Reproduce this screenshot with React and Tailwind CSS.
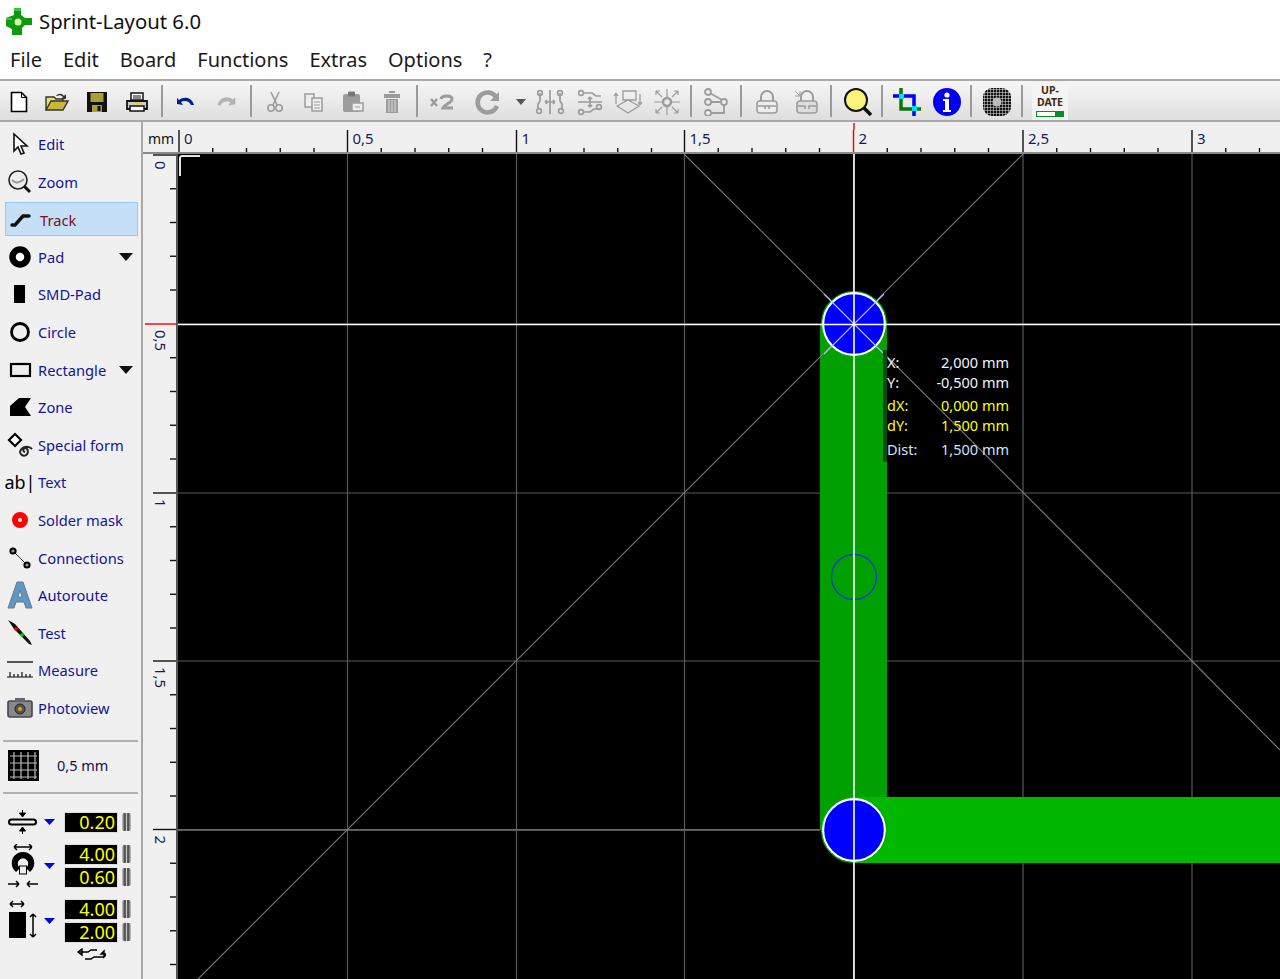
import React from 'react';

const menus = ['File', 'Edit', 'Board', 'Functions', 'Extras', 'Options', '?'];
const GRAY = '#9c9c9c';

// toolbar icons, 24x24 box
const Tb = ({ children }) => <svg width="24" height="24" viewBox="0 0 24 24">{children}</svg>;

const toolIcons = {
  new: <Tb><path d="M4.500 2.500h10l5 5v14h-15z" fill="#fff" stroke="#000" strokeWidth="1.600" /><path d="M14.500 2.500v5h5" fill="none" stroke="#000" /></Tb>,
  open: <Tb><path d="M1 20V7h8l2 2h7v3" fill="#e8e070" stroke="#333" strokeWidth="1.400" /><path d="M1 20l5-9h17l-5 9z" fill="#c8b838" stroke="#333" strokeWidth="1.400" /><path d="M11 6c2-3 6-3 8 0l2-2v5h-5l2-2c-2-2-4-2-6-1z" fill="#333" /></Tb>,
  save: <Tb><rect x="2" y="2" width="20" height="20" fill="#111" /><rect x="5.500" y="3" width="13" height="9" fill="#a8a030" /><rect x="7" y="15" width="10" height="7" fill="#a8a030" /><rect x="12.500" y="16" width="3" height="5" fill="#111" /></Tb>,
  print: <Tb><path d="M6 3h12v7H6z" fill="#fff" stroke="#111" strokeWidth="1.500" /><path d="M2 11h20v8H2z" fill="#ccc" stroke="#111" strokeWidth="1.800" /><path d="M5 16h14v5H5z" fill="#fff" stroke="#111" strokeWidth="1.500" /><path d="M8 6h8M8 8h8" stroke="#111" /><path d="M10 13h6" stroke="#e8d800" strokeWidth="2" /></Tb>,
  undo: <Tb><path d="M9 15l-6-1 0-6 2 2c5-4 13-3 15 5h-3c-2-4-6-5-10-3z" fill="#00208c" /></Tb>,
  redo: <Tb><path d="M15 15l6-1 0-6-2 2c-5-4-13-3-15 5h2c3-4 7-5 11-3z" fill="#b4b4b4" stroke="#9c9c9c" strokeWidth=".5" /></Tb>,
  cut: <Tb><path d="M8 2l6 13M16 2l-6 13" stroke={GRAY} strokeWidth="1.600" fill="none" /><circle cx="8" cy="18" r="3.200" fill="none" stroke={GRAY} strokeWidth="1.600" /><circle cx="16" cy="18" r="3.200" fill="none" stroke={GRAY} strokeWidth="1.600" /></Tb>,
  copy: <Tb><path d="M3 4h9v13H3z" fill="#eee" stroke={GRAY} strokeWidth="1.500" /><path d="M10 8h10v13H10z" fill="#eee" stroke={GRAY} strokeWidth="1.500" /><path d="M12 12h6M12 15h6M12 18h6" stroke={GRAY} /></Tb>,
  paste: <Tb><rect x="2" y="4" width="17" height="18" rx="2" fill={GRAY} /><rect x="7" y="1.500" width="7" height="5" rx="1" fill="#777" /><path d="M11 13h11v8H11z" fill="#eee" stroke={GRAY} strokeWidth="1.500" /><path d="M14 17h5" stroke={GRAY} /></Tb>,
  trash: <Tb><path d="M9 1h6v2H9zM4 4h16v4H4z" fill={GRAY} /><path d="M6 9h12v14H6z" fill={GRAY} /><path d="M9 10v12M12 10v12M15 10v12" stroke="#ddd" /></Tb>,
  x2: <svg width="30" height="24" viewBox="0 0 30 24"><path d="M3 9l6 7M9 9l-6 7" stroke={GRAY} strokeWidth="2.400" /><path d="M13 9c1-4 11-4 11 0 0 4-7 5-9 9h10" fill="none" stroke={GRAY} strokeWidth="3" /></svg>,
  rotate: <svg width="26" height="26" viewBox="0 0 26 26"><path d="M21 8A10 10 0 1 0 22 17" fill="none" stroke={GRAY} strokeWidth="4.500" /><path d="M24 3v9h-9z" fill={GRAY} /></svg>,
  drop: <svg width="10" height="6" viewBox="0 0 10 6"><path d="M0 0h10L5 6z" fill="#555" /></svg>,
  flipH: <svg width="28" height="28" viewBox="0 0 28 28"><path d="M4 5v8l-2 3v6M24 5v8l2 3v6M9 14h10M9 14l2-2M9 14l2 2M19 14l-2-2M19 14l-2 2M14 2v24" stroke={GRAY} strokeWidth="1.700" fill="none" /><circle cx="4" cy="5" r="2.400" fill="none" stroke={GRAY} strokeWidth="1.600" /><circle cx="24" cy="5" r="2.400" fill="none" stroke={GRAY} strokeWidth="1.600" /><circle cx="3" cy="23" r="2.400" fill="none" stroke={GRAY} strokeWidth="1.600" /><circle cx="25" cy="23" r="2.400" fill="none" stroke={GRAY} strokeWidth="1.600" /></svg>,
  flipV: <svg width="28" height="28" viewBox="0 0 28 28"><path d="M7 5h9l4 3h5M2 14h24M7 24h7l4-3h7M14 9v10M14 9l-2 2M14 9l2 2M14 19l-2-2M14 19l2-2" stroke={GRAY} strokeWidth="1.700" fill="none" /><circle cx="5" cy="5" r="2.400" fill="none" stroke={GRAY} strokeWidth="1.600" /><circle cx="5" cy="24" r="2.400" fill="none" stroke={GRAY} strokeWidth="1.600" /><circle cx="23" cy="19" r="2.400" fill="none" stroke={GRAY} strokeWidth="1.600" /></svg>,
  distort: <svg width="30" height="26" viewBox="0 0 30 26"><path d="M10 2h13v9H10zM3 4v11M3 4l-2 3M3 4l2 3M27 5v11M27 16l-2-3M27 16l2-3M4 17l11-6 11 6-11 7z" fill="none" stroke={GRAY} strokeWidth="1.300" /></svg>,
  explode: <svg width="30" height="28" viewBox="0 0 30 28"><circle cx="15" cy="14" r="4" fill="none" stroke={GRAY} strokeWidth="2.500" /><path d="M15 1v8M15 19v8M2 14h8M20 14h8M4 3l6 6M4 3v4M4 3h4M26 3l-6 6M26 3v4M26 3h-4M4 25l6-6M4 25v-4M4 25h4M26 25l-6-6M26 25v-4M26 25h-4" fill="none" stroke={GRAY} strokeWidth="1.200" /></svg>,
  nodes: <svg width="26" height="28" viewBox="0 0 26 28"><path d="M5 4l16 9v12H8M5 14h16" fill="none" stroke={GRAY} strokeWidth="1.800" /><circle cx="5" cy="4" r="3" fill="#eee" stroke={GRAY} strokeWidth="1.800" /><circle cx="5" cy="14" r="3" fill="#eee" stroke={GRAY} strokeWidth="1.800" /><circle cx="5" cy="25" r="3" fill="#eee" stroke={GRAY} strokeWidth="1.800" /><circle cx="21" cy="14" r="3" fill="#eee" stroke={GRAY} strokeWidth="1.800" /></svg>,
  lock: <Tb><path d="M6 11V7a6 6 0 0 1 12 0v4" fill="none" stroke={GRAY} strokeWidth="2" /><rect x="2" y="11" width="20" height="12" rx="3" fill="#eee" stroke={GRAY} strokeWidth="1.600" /><path d="M3 16h7v3M21 16h-7v3M10 16h4" fill="none" stroke={GRAY} strokeWidth="1.500" /></Tb>,
  lock2: <Tb><path d="M7 11V7a6 6 0 0 1 12 0v4" fill="none" stroke={GRAY} strokeWidth="2" /><path d="M1 1l5 5M6 1v5H1" fill="none" stroke={GRAY} /><rect x="3" y="11" width="20" height="12" rx="3" fill="#ddd" stroke={GRAY} strokeWidth="1.600" /><path d="M4 16h7v3M22 16h-7v3" fill="none" stroke={GRAY} strokeWidth="1.500" /></Tb>,
  search: <svg width="30" height="30" viewBox="0 0 30 30"><circle cx="13" cy="13" r="11" fill="#fbf37a" stroke="#111" strokeWidth="2" /><path d="M21 21l7 7" stroke="#111" strokeWidth="3.500" /></svg>,
  crop: <svg width="30" height="30" viewBox="0 0 30 30"><path d="M9 1v21h20" fill="none" stroke="#087808" strokeWidth="3.500" /><path d="M1 9h21v20" fill="none" stroke="#0000ff" strokeWidth="3.500" /><rect x="7" y="7" width="5" height="5" fill="#00e0f0" /><rect x="20" y="19" width="5" height="5" fill="#00e0f0" /></svg>,
  info: <svg width="28" height="28" viewBox="0 0 28 28"><circle cx="14" cy="14" r="14" fill="#0000f0" /><circle cx="14" cy="7" r="2.600" fill="#fff" /><path d="M10 11h6v11h2v2h-8v-2h2v-9h-2z" fill="#fff" /></svg>,
  chip: (
    <svg width="30" height="30" viewBox="0 0 30 30">
      <defs>
        <pattern id="chipdots" width="3" height="3" patternUnits="userSpaceOnUse">
          <rect width="2.500" height="2.500" fill="#111" />
        </pattern>
      </defs>
      <rect x="1" y="1" width="28" height="28" rx="9" fill="url(#chipdots)" />
      <circle cx="15" cy="15" r="4.500" fill="#bbb" />
    </svg>
  ),
};

const toolbar = [
  ['new', 37], ['open', 40], ['save', 40], ['print', 40], [null, 9],
  ['undo', 40], ['redo', 40], [null, 9],
  ['cut', 39], ['copy', 39], ['paste', 39], ['trash', 39], [null, 12],
  ['x2', 40], ['rotate', 50], ['drop', 16], ['flipH', 42], ['flipV', 37], ['distort', 39], ['explode', 39], [null, 10],
  ['nodes', 40], [null, 10],
  ['lock', 41], ['lock2', 38], [null, 12],
  ['search', 41], [null, 8],
  ['crop', 41], ['info', 40], [null, 8],
  ['chip', 43], [null, 8],
];

// sidebar icons, 28x28 box
const Sb = ({ children }) => <svg width="28" height="28" viewBox="0 0 28 28">{children}</svg>;

const tools = [
  { label: 'Edit', icon: <Sb><path d="M8 4v17l4-4 3 7 3-1-3-7h6z" fill="#fff" stroke="#111" strokeWidth="1.600" /></Sb> },
  { label: 'Zoom', icon: <Sb><circle cx="12" cy="12" r="9" fill="#eee" stroke="#222" strokeWidth="1.600" /><path d="M6 12c3 3 6 4 12-1" fill="none" stroke="#999" strokeWidth="2" /><path d="M18 18l6 6" stroke="#111" strokeWidth="3" /></Sb> },
  { label: 'Track', active: true, icon: <Sb><path d="M5 20h3l8-9h6" fill="none" stroke="#111" strokeWidth="3.400" strokeLinecap="round" /></Sb> },
  { label: 'Pad', arrow: true, icon: <Sb><circle cx="14" cy="14" r="7.500" fill="#fff" stroke="#000" strokeWidth="6.500" /></Sb> },
  { label: 'SMD-Pad', icon: <Sb><rect x="8" y="5" width="11" height="18" fill="#000" /></Sb> },
  { label: 'Circle', icon: <Sb><circle cx="14" cy="14" r="8.500" fill="none" stroke="#000" strokeWidth="2.800" /></Sb> },
  { label: 'Rectangle', arrow: true, icon: <Sb><rect x="5" y="8" width="19" height="12" fill="#eee" stroke="#000" strokeWidth="2.200" /></Sb> },
  { label: 'Zone', icon: <Sb><path d="M4 24V14L13 6h12l-6 9 6 9z" transform="translate(0 -1)" fill="#000" /></Sb> },
  { label: 'Special form', icon: <Sb><path d="M9 3l6 6-6 6-6-6z" fill="#fff" stroke="#000" strokeWidth="2.200" /><path d="M19 21a2 2 0 1 1 2-3 4 4 0 1 1-7 3 7 7 0 0 1 12-3" fill="none" stroke="#222" strokeWidth="2" /></Sb> },
  { label: 'Text', ab: true },
  { label: 'Solder mask', icon: <Sb><circle cx="14" cy="14" r="5" fill="#fff" stroke="#f00" strokeWidth="6" /></Sb> },
  { label: 'Connections', icon: <Sb><path d="M7 7l13 13" stroke="#333" /><circle cx="7" cy="7" r="2.600" fill="#999" stroke="#000" strokeWidth="2" /><circle cx="21" cy="21" r="2.600" fill="#999" stroke="#000" strokeWidth="2" /></Sb> },
  { label: 'Autoroute', icon: <Sb><path d="M2 27L11 1h6l9 26h-6l-2-6h-8l-2 6zM12 16h4l-2-7z" fill="#5f97c4" stroke="#6a7a88" strokeWidth="1" /></Sb> },
  { label: 'Test', icon: <Sb><path d="M2 1l7 4 15 17 2 4-3-1L8 10z" fill="#111" /><circle cx="10" cy="10" r="1.800" fill="#f00" /><circle cx="16" cy="16" r="1.800" fill="#0d0" /></Sb> },
  { label: 'Measure', icon: <Sb><path d="M1 6h26" stroke="#111" strokeWidth="1.400" /><path d="M1 21h26M4 21v-5M8 21v-3M12 21v-3M16 21v-5M20 21v-3M24 21v-3" stroke="#111" strokeWidth="1.200" /></Sb> },
  { label: 'Photoview', icon: <Sb><rect x="2" y="7" width="24" height="16" rx="2" fill="#888" stroke="#445" strokeWidth="1.600" /><rect x="9" y="4" width="10" height="4" fill="#667" /><circle cx="14" cy="15" r="5" fill="#555" stroke="#222" /><circle cx="14" cy="15" r="2" fill="#e6a020" /></Sb> },
];

const Arrow = ({ className }) => (
  <svg className={className} width="14" height="8" viewBox="0 0 14 8"><path d="M0 0h14L7 8z" fill="#111" /></svg>
);

const BlueDrop = () => (
  <svg width="11" height="6" viewBox="0 0 11 6"><path d="M0 0h11L5.500 6z" fill="#0000f0" /></svg>
);

const Field = ({ value }) => (
  <div className="flex items-center">
    <div className="w-[54px] h-[21px] bg-black border border-[#dedede] text-[#ffff00] text-[18px] leading-[19px] text-right pr-[2px]">{value}</div>
    <div className="ml-[4px] w-[9px] h-[18px] rounded-[2px] bg-[linear-gradient(90deg,#ccc,#333_35%,#ccc_50%,#333_65%,#ccc)]" />
  </div>
);

const Sidebar = () => (
  <aside className="w-[143px] h-full shrink-0 bg-[#f0f0f0] border-r-2 border-[#a9a9a9] pt-[5px] text-[14.7px] text-[#14149a] overflow-hidden">
    {tools.map((t) => (
      <div
        key={t.label}
        className={`mx-[5px] w-[133px] h-[34px] mb-[3.6px] flex items-center border ${t.active ? 'bg-[#c4dff6] border-[#93c9f7] text-[#7a1020]' : 'border-transparent'}`}
      >
        <span className={`flex justify-center shrink-0 mr-[4px] ${t.active ? 'w-[30px]' : 'w-[28px]'}`}>
          {t.ab ? (
            <span className="text-[18px] text-black leading-none whitespace-nowrap">ab|</span>
          ) : (
            t.icon
          )}
        </span>
        <span className={`whitespace-nowrap ${t.active ? 'pt-[2px]' : ''}`}>{t.label}</span>
        {t.arrow && <Arrow className="ml-auto mr-[4px]" />}
      </div>
    ))}

    <div className="mx-[3px] mt-[15px] h-[2px] bg-[#b0b0b0]" />
    <div className="flex items-center mt-[9px] h-[30px] pl-[8px]">
      <svg width="31" height="31" viewBox="0 0 31 31">
        <rect width="31" height="31" fill="#000" />
        <path d="M2 6h27M2 13h27M2 20h27M2 27h27M6 2v27M13 2v27M20 2v27M27 2v27" stroke="#bbb" strokeWidth="1.200" />
      </svg>
      <span className="ml-[18px] text-[14.5px] text-[#10104a]">0,5 mm</span>
    </div>
    <div className="mx-[3px] mt-[11px] h-[2px] bg-[#b0b0b0]" />

    <div className="mt-[18px] flex items-center h-[21px] pl-[8px]">
      <svg className="w-[30px] shrink-0" width="30" height="24" viewBox="0 0 30 24">
        <rect x="1" y="9.500" width="27" height="5" rx="2.500" fill="#eee" stroke="#000" strokeWidth="2" />
        <path d="M14.500 0v5M11.500 3h6l-3 4zM14.500 24v-5M11.500 21h6l-3-4z" fill="#000" stroke="#000" />
      </svg>
      <span className="ml-[6px] w-[20px] shrink-0"><BlueDrop /></span>
      <Field value="0.20" />
    </div>

    <div className="mt-[11px] flex items-center pl-[8px]">
      <svg className="w-[30px] shrink-0" width="30" height="44" viewBox="0 0 30 44">
        <path d="M6 3h18M6 3l3-3M6 3l3 3M24 3l-3-3M24 3l-3 3" fill="none" stroke="#000" strokeWidth="1.500" />
        <path d="M8 27a10.500 10.500 0 1 1 14 0l-3-3a6 6 0 1 0-8 0z" fill="#000" stroke="#000" strokeWidth="1.500" />
        <rect x="11.500" y="22" width="7" height="8" fill="#eee" stroke="#000" />
        <path d="M0 40h11M11 40l-3-3M11 40l-3 3M30 40H19M19 40l3-3M19 40l3 3" fill="none" stroke="#000" strokeWidth="1.500" />
      </svg>
      <span className="ml-[6px] w-[20px] shrink-0"><BlueDrop /></span>
      <div className="flex flex-col gap-[2px]">
        <Field value="4.00" />
        <Field value="0.60" />
      </div>
    </div>

    <div className="mt-[11px] flex items-center pl-[8px]">
      <svg className="w-[30px] shrink-0" width="30" height="44" viewBox="0 0 30 44">
        <path d="M2 5h14M2 5l3-3M2 5l3 3M16 5l-3-3M16 5l-3 3M25 15v23M25 15l-3 3M25 15l3 3M25 38l-3-3M25 38l3-3" fill="none" stroke="#000" strokeWidth="1.500" />
        <rect x="1" y="13" width="17" height="26" fill="#000" />
      </svg>
      <span className="ml-[6px] w-[20px] shrink-0"><BlueDrop /></span>
      <div className="flex flex-col gap-[2px]">
        <Field value="4.00" />
        <Field value="2.00" />
      </div>
    </div>

    <div className="mt-[5px] pl-[76px]">
      <svg width="30" height="12" viewBox="0 0 30 12">
        <path d="M2 4h10l3-2h6M2 4l4-3v6zM28 9H18l-3 2H9M28 9V3l-3 3h6z" fill="none" stroke="#000" strokeWidth="1.400" />
      </svg>
    </div>
  </aside>
);

const X_TICKS = [179, 347.5, 516.5, 684.5, 853.5, 1023, 1192];
const Y_TICKS = [155, 324, 493, 661, 829.5];
const xLabels = ['0', '0,5', '1', '1,5', '2', '2,5', '3'];
const yLabels = ['0', '0,5', '1', '1,5', '2'];
const STEP = 33.75;

const TopRuler = () => (
  <svg className="block w-full h-[32px]" viewBox="143 122 1137 32">
    <rect x="143" y="122" width="1137" height="32" fill="#f0f0f0" />
    <text x="148" y="144" fontSize="14" fill="#111">mm</text>
    {X_TICKS.map((x, i) => (
      <g key={x}>
        <path d={`M${x} 130V152`} stroke={x === 853.5 ? '#f00000' : '#111'} strokeWidth="1.400" />
        <text x={x + 5} y="144" fontSize="15" fill="#1a1a5a">{xLabels[i]}</text>
        {[1, 2, 3, 4].map((k) => (
          <path key={k} d={`M${x + k * STEP} 148V152`} stroke="#111" strokeWidth="1.400" />
        ))}
      </g>
    ))}
    <path d="M854 123V130" stroke="#f00000" strokeWidth="1.400" />
    <rect x="143" y="152" width="1137" height="2" fill="#8a8a8a" />
  </svg>
);

const LeftRuler = () => (
  <svg className="block w-[35px] h-full shrink-0" viewBox="143 154 35 825" preserveAspectRatio="xMinYMin slice">
    <rect x="143" y="154" width="35" height="825" fill="#f0f0f0" />
    {Y_TICKS.map((y, i) => (
      <g key={y}>
        <path d={`M153 ${y}H176`} stroke={i === 1 ? '#f00000' : '#111'} strokeWidth="1.400" />
        <text transform={`translate(155 ${y + 6}) rotate(90)`} fontSize="15" fill="#1a1a5a">{yLabels[i]}</text>
        {[1, 2, 3, 4].map((k) => (
          <path key={k} d={`M170 ${y + k * STEP}H176`} stroke="#111" strokeWidth="1.400" />
        ))}
      </g>
    ))}
    <path d="M145 324H153" stroke="#f00000" strokeWidth="1.400" />
    <rect x="176" y="154" width="2" height="825" fill="#555" />
  </svg>
);

const Board = () => (
  <svg className="block w-full h-full" viewBox="178 154 1102 825" preserveAspectRatio="xMinYMin slice">
    <rect x="178" y="154" width="1102" height="825" fill="#000" />
    <path d="M180 176V158q0-2 2-2H200" fill="none" stroke="#e4e4e4" strokeWidth="2" />
    {/* grid */}
    {X_TICKS.slice(1).map((x) => (
      <path key={x} d={`M${x} 154V979`} stroke="#5a5a5a" strokeWidth="1.200" />
    ))}
    {Y_TICKS.slice(1).map((y) => (
      <path key={y} d={`M178 ${y}H1280`} stroke="#5a5a5a" strokeWidth="1.200" />
    ))}
    {/* tracks */}
    <rect x="820" y="324" width="67" height="506" fill="#00a000" />
    <rect x="854" y="797" width="426" height="66" fill="#00b800" />
    <path d="M820 830H178" stroke="#707070" strokeWidth="1.500" />
    {/* guide diagonals */}
    <path d="M684 154L1192 661 1280 750M1023 154L198 979" stroke="#7c7c7c" strokeWidth="1.100" fill="none" />
    {/* pads */}
    <circle cx="854" cy="324" r="31" fill="#0000ff" stroke="#fff" strokeWidth="2.400" />
    <circle cx="854" cy="324" r="32.500" fill="none" stroke="#00b000" strokeWidth="1.200" />
    <path d="M824 294L884 354M884 294L824 354" stroke="#b8b8f0" strokeWidth="1.100" />
    <circle cx="854" cy="830" r="31" fill="#0000ff" stroke="#fff" strokeWidth="2.400" />
    <circle cx="854" cy="830" r="32.500" fill="none" stroke="#00b000" strokeWidth="1.200" />
    <circle cx="854" cy="577" r="22.500" fill="none" stroke="#1040c0" strokeWidth="1.400" />
    {/* crosshair */}
    <path d="M854 154V979M178 324.500H1280" stroke="#fff" strokeWidth="1.600" />
  </svg>
);

const readout = [
  { name: 'X:', value: '2,000 mm', color: 'text-[#f0f4ff]', h: 'h-[20px]' },
  { name: 'Y:', value: '-0,500 mm', color: 'text-[#f0f4ff]', h: 'h-[23px]' },
  { name: 'dX:', value: '0,000 mm', color: 'text-[#ffff00]', h: 'h-[20px]' },
  { name: 'dY:', value: '1,500 mm', color: 'text-[#ffff00]', h: 'h-[24px]' },
  { name: 'Dist:', value: '1,500 mm', color: 'text-[#cfe4ff]', h: 'h-[20px]' },
];

const Readout = () => (
  <div className="absolute left-[705px] top-[196px] w-[126px] h-[112px] pt-[2px] text-[14.5px] border-l-4 border-[#0a4a0a]">
    {readout.map((r) => (
      <div key={r.name} className={`flex justify-between leading-[20px] ${r.h} ${r.color}`}>
        <span>{r.name}</span>
        <span>{r.value}</span>
      </div>
    ))}
  </div>
);

export default function App() {
  return (
    <div className="w-[1280px] h-[979px] overflow-hidden flex flex-col bg-white font-['Noto_Sans',sans-serif]">
      <div className="h-[40px] flex items-center pl-[5px] pt-[3px] shrink-0">
        <svg width="28" height="28" viewBox="0 0 28 28">
          <path d="M9 0h7v7l4 3h7v7h-7l-3 3v7H7v-6l-6-3v-8l8-3z" fill="#0e9a0e" />
          <path d="M9 0h7v3H9zM1 10h6v2H1z" fill="#44c044" />
          <circle cx="13" cy="14" r="3.500" fill="#d8f8b0" />
        </svg>
        <span className="ml-[6px] text-[20.3px] text-[#111]">Sprint-Layout 6.0</span>
      </div>

      <nav className="h-[39px] flex items-center pl-[10px] gap-[21px] text-[20px] text-[#1a1a1a] shrink-0">
        {menus.map((m) => <span key={m}>{m}</span>)}
      </nav>

      <div className="h-[43px] shrink-0 flex items-center border-t-2 border-b-2 border-[#a8a8a8] bg-[linear-gradient(#f7f7f7,#dedede)]">
        {toolbar.map(([name, w], i) =>
          name ? (
            <span key={i} className="flex justify-center items-center h-full pt-[2px] shrink-0" style={{ width: w }}>{toolIcons[name]}</span>
          ) : (
            <span key={i} className="flex justify-center shrink-0" style={{ width: w }}>
              <span className="block w-[2px] h-[32px] bg-[#9a9a9a]" />
            </span>
          )
        )}
        <div className="ml-[6px] w-[36px] h-[39px] bg-[#f4f4f4] flex flex-col items-center justify-center text-[10.5px] leading-[12px] font-bold text-[#3a2a10]">
          <span>UP-</span>
          <span>DATE</span>
          <span className="mt-[3px] block w-[28px] h-[6px] bg-[#0c8c2c] border border-[#0c8c2c] pr-[8px]">
            <span className="block h-full bg-white" />
          </span>
        </div>
      </div>

      <div className="flex-1 min-h-0 flex">
        <Sidebar />
        <div className="flex-1 min-w-0 flex flex-col">
          <TopRuler />
          <div className="flex-1 min-h-0 flex">
            <LeftRuler />
            <div className="relative flex-1 min-w-0">
              <Board />
              <Readout />
            </div>
          </div>
        </div>
      </div>
    </div>
  );
}
